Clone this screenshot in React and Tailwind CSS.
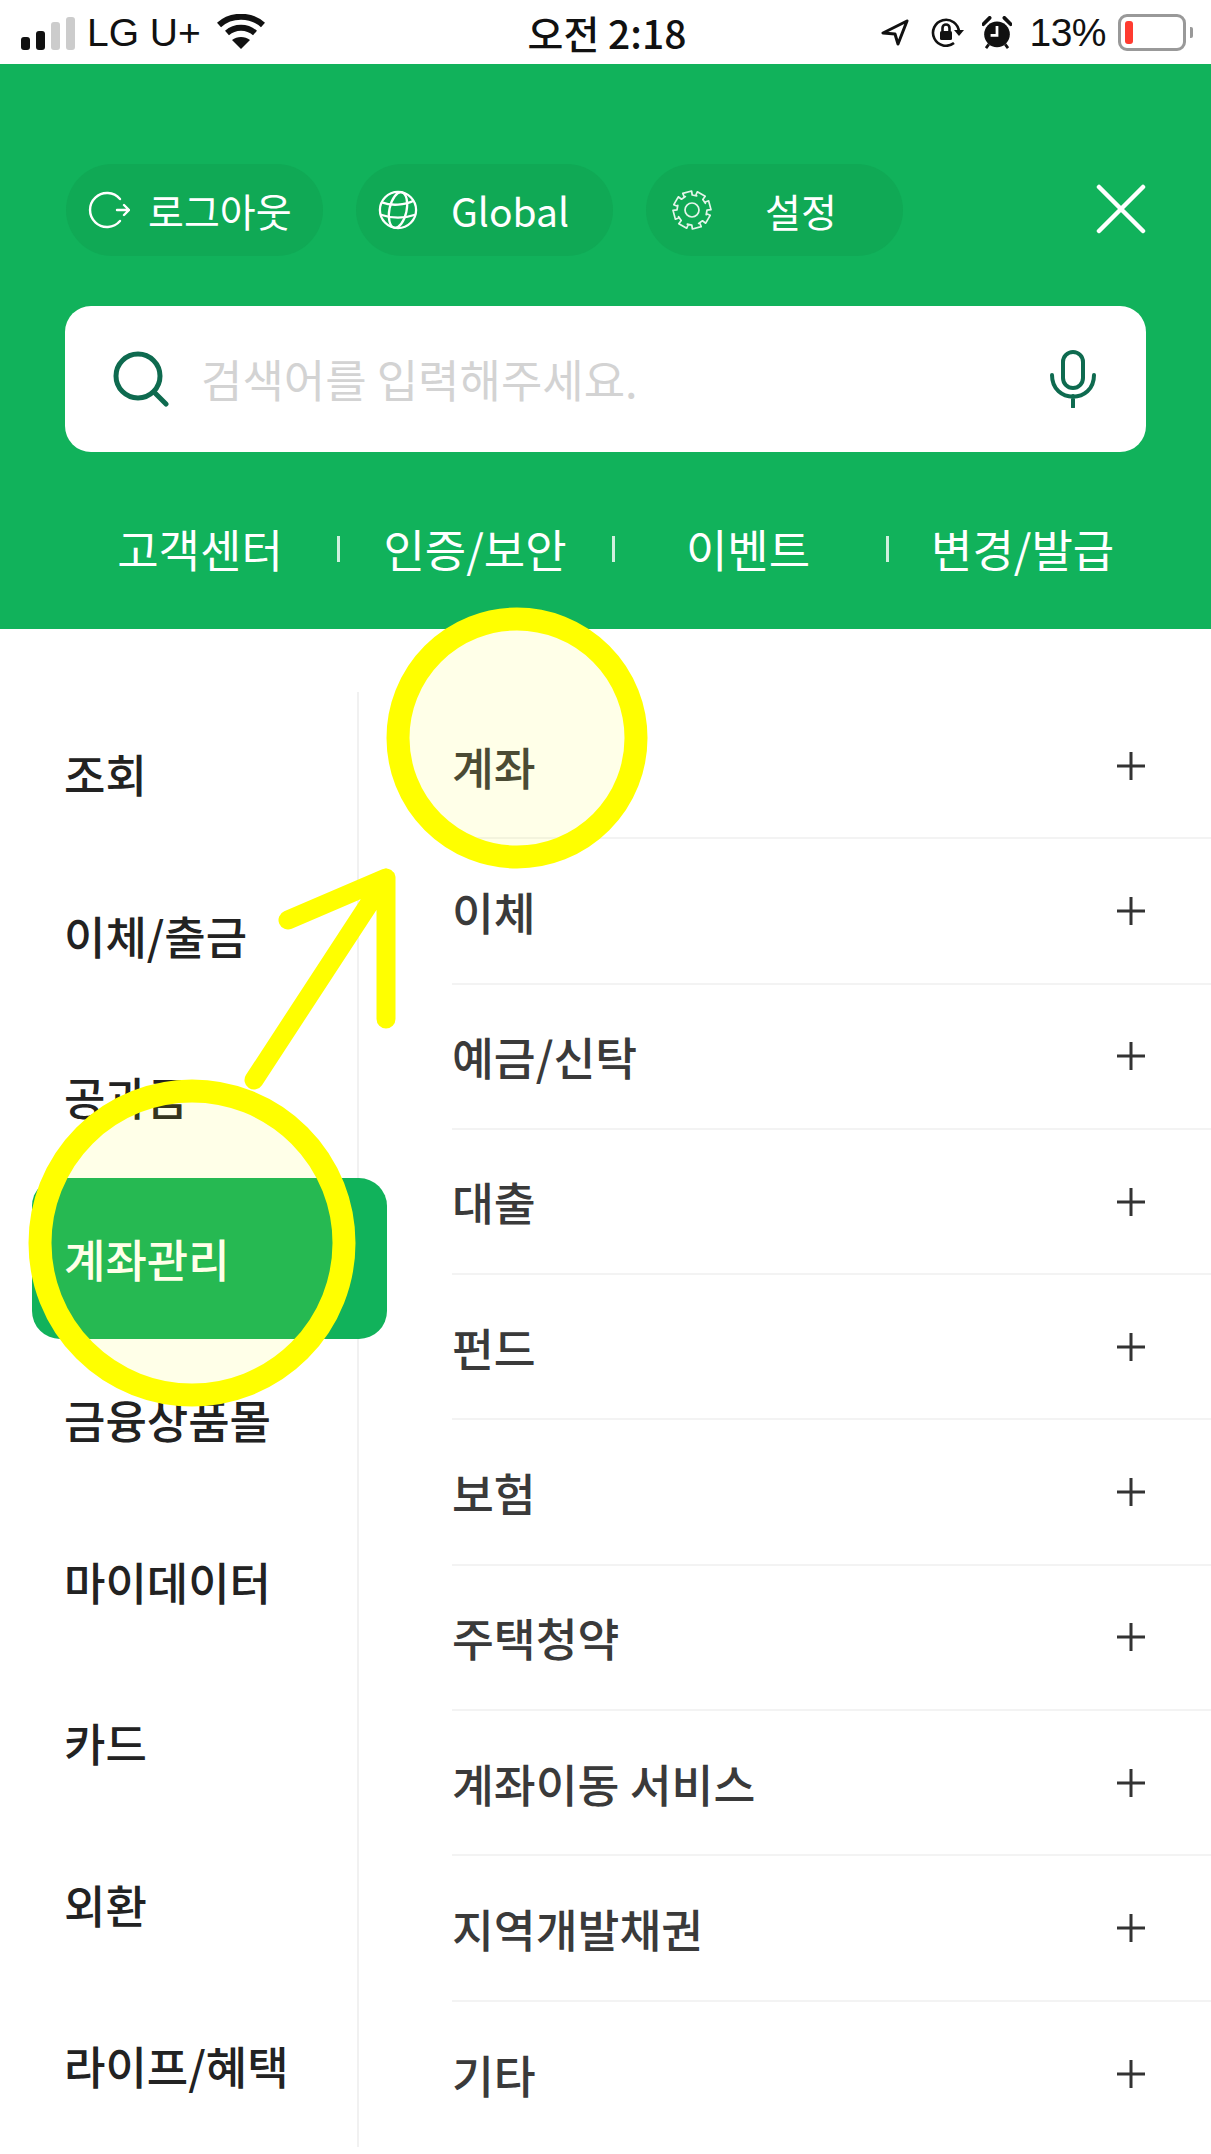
const FONT = "font-['Noto_Sans_CJK_KR','Noto_Sans',sans-serif]";

const sideMenus = ['조회', '이체/출금', '공과금', '계좌관리', '금융상품몰', '마이데이터', '카드', '외환', '라이프/혜택'];
const subMenus = ['계좌', '이체', '예금/신탁', '대출', '펀드', '보험', '주택청약', '계좌이동 서비스', '지역개발채권', '기타'];

// 설정 아이콘 톱니 8개
const gearPath = () => {
  const pts = [];
  for (let i = 0; i < 8; i++) {
    const a = (i * Math.PI) / 4 - Math.PI / 8;
    [[15, -0.13], [19, -0.1], [19, 0.34], [15, 0.37], [15, 0.65]].forEach(([r, d]) => {
      const t = a + d * (Math.PI / 4) * 1.4;
      pts.push(`${(20 + r * Math.cos(t)).toFixed(1)} ${(20 + r * Math.sin(t)).toFixed(1)}`);
    });
  }
  return `M${pts.join(' L')} Z`;
};

function StatusBar() {
  return (
    <div className="h-[64px] bg-white flex items-center pl-[21px] pr-[18px] font-['Liberation_Sans',sans-serif] text-[39px] leading-none text-[#111]">
      <div className="flex-1 flex items-center">
        <div className="flex items-end gap-[6px] h-[34px] mt-[1px]">
          <span className="w-[9px] h-[13px] rounded-[3px] bg-[#111]" />
          <span className="w-[9px] h-[19px] rounded-[3px] bg-[#111]" />
          <span className="w-[9px] h-[28px] rounded-[3px] bg-[#ccc]" />
          <span className="w-[9px] h-[33px] rounded-[3px] bg-[#ccc]" />
        </div>
        <span className="ml-[12px]">LG U+</span>
        <svg className="ml-[16px]" width="48" height="36" viewBox="0 0 48 36" fill="none" stroke="#111" strokeWidth="6">
          <path d="M2 11 C14 0 34 0 46 11" />
          <path d="M10 19 C18 12 30 12 38 19" />
          <path d="M24 35 L15 26 C20 22 28 22 33 26 Z" fill="#111" stroke="none" />
        </svg>
      </div>
      <div className={`${FONT} text-[39px] font-medium`}>오전 2:18</div>
      <div className="flex-1 flex items-center justify-end">
        <svg width="28" height="28" viewBox="0 0 28 28" fill="none" stroke="#111" strokeWidth="3" strokeLinejoin="round">
          <path d="M26 3 L2 15 L14 16 L17 26 Z" />
        </svg>
        <svg className="ml-[21px]" width="34" height="30" viewBox="0 0 34 30" fill="none" stroke="#111" strokeWidth="2.6">
          <path d="M29 15 A13 13 0 1 0 24 26" />
          <path d="M24 13 L29 19 L34 13" fill="#111" stroke="none" />
          <rect x="10" y="14" width="12" height="9" rx="1.5" fill="#111" stroke="none" />
          <path d="M12.5 14 V11 A3.5 3.5 0 0 1 19.5 11 V14" />
        </svg>
        <svg className="ml-[18px]" width="30" height="33" viewBox="0 0 32 36">
          <circle cx="16" cy="20" r="14" fill="#111" />
          <path d="M16 11 V21 H9" fill="none" stroke="#fff" strokeWidth="3" />
          <path d="M1 9 L8 2 M31 9 L24 2" stroke="#111" strokeWidth="4" strokeLinecap="round" />
          <path d="M7 31 L4 35 M25 31 L28 35" stroke="#111" strokeWidth="3" />
        </svg>
        <span className="ml-[17px] tracking-[-0.5px]">13%</span>
        <div className="ml-[12px] w-[68px] h-[37px] border-[3px] border-[#999] rounded-[9px] p-[4px]">
          <div className="w-[8px] h-full bg-[#ff3b30] rounded-[3px]" />
        </div>
        <span className="ml-[4px] w-[3px] h-[11px] bg-[#999] rounded-r-[2px]" />
      </div>
    </div>
  );
}

function Pill({ icon, label, className }) {
  return (
    <div className="w-[257px] h-[92px] rounded-[46px] bg-[#10a955] flex items-center text-white">
      {icon}
      <span className={className}>{label}</span>
    </div>
  );
}

function Header() {
  return (
    <div className="h-[565px] bg-[#11b25b] px-[65px] pt-[100px]">
      <div className="flex items-center">
        <div className="flex gap-[33px] ml-[1px]">
          <Pill
            label="로그아웃"
            className="ml-[18px] text-[39px]"
            icon={
              <svg className="ml-[22px]" width="42" height="42" viewBox="0 0 42 42" fill="none" stroke="#fff" strokeWidth="2.4" strokeLinecap="round" strokeLinejoin="round">
                <path d="M32 10 A17 17 0 1 0 32 32" />
                <path d="M29 21 H41 M36 16 L41 21 L36 26" />
              </svg>
            }
          />
          <Pill
            label="Global"
            className="ml-[33px] text-[39px]"
            icon={
              <svg className="ml-[22px]" width="40" height="40" viewBox="0 0 42 42" fill="none" stroke="#fff" strokeWidth="2.4">
                <circle cx="21" cy="21" r="19" />
                <ellipse cx="21" cy="21" rx="9" ry="19" transform="rotate(12 21 21)" />
                <path d="M4 13 C14 17 28 16 38 11 M3 26 C14 30 28 30 39 26" />
              </svg>
            }
          />
          <Pill
            label="설정"
            className="ml-[53px] text-[39px]"
            icon={
              <svg className="ml-[26px]" width="40" height="40" viewBox="0 0 40 40" fill="none" stroke="#e4f5ea" strokeWidth="1.7" strokeLinejoin="round">
                <path d={gearPath()} />
                <circle cx="20" cy="20" r="7" />
              </svg>
            }
          />
        </div>
        <svg className="ml-auto -mt-[2px]" width="50" height="50" viewBox="0 0 50 50" stroke="#fff" strokeWidth="4.5" strokeLinecap="round">
          <path d="M3 3 L47 47 M47 3 L3 47" />
        </svg>
      </div>

      <div className="mt-[50px] h-[146px] rounded-[26px] bg-white flex items-center pl-[47px] pr-[49px]">
        <svg width="58" height="56" viewBox="0 0 58 56" fill="none" stroke="#0e6a4f" strokeWidth="5" strokeLinecap="round">
          <circle cx="26" cy="25" r="22" />
          <path d="M42 41 L54 53" />
        </svg>
        <span className="ml-[31px] text-[45px] text-[#d3d3d3]">검색어를 입력해주세요.</span>
        <svg className="ml-auto" width="48" height="58" viewBox="0 0 48 58" fill="none" stroke="#0e6a4f" strokeWidth="4" strokeLinecap="round">
          <rect x="14" y="2" width="20" height="36" rx="10" />
          <path d="M3 25 C3 54 45 54 45 25 M24 46 V57" />
        </svg>
      </div>

      <div className="mt-[74px] flex items-center text-white text-[45px] leading-none">
        <span className="w-[270px] text-center">고객센터</span>
        <span className="ml-[2px] w-[3px] h-[26px] bg-white/80" />
        <span className="w-[270px] text-center">인증/보안</span>
        <span className="ml-[2px] w-[3px] h-[26px] bg-white/80" />
        <span className="w-[266px] text-center">이벤트</span>
        <span className="ml-[5px] w-[3px] h-[26px] bg-white/80" />
        <span className="pl-[42px] whitespace-nowrap">변경/발급</span>
      </div>
    </div>
  );
}

function Overlays() {
  return (
    <svg className="absolute left-0 top-0 z-20" width="1211" height="2154" viewBox="0 0 1211 2154" fill="none">
      <circle cx="517" cy="738" r="119" fill="#ffff00" fillOpacity="0.09" stroke="#ffff00" strokeWidth="23" />
      <circle cx="192" cy="1243" r="152" fill="#ffff00" fillOpacity="0.09" stroke="#ffff00" strokeWidth="23" />
      <path d="M254 1080 L386 878 M288 920 L386 878 V1019" stroke="#ffff00" strokeWidth="19" strokeLinecap="round" strokeLinejoin="round" />
    </svg>
  );
}

export default function App() {
  return (
    <div className={`relative w-[1211px] h-[2154px] overflow-hidden bg-white ${FONT}`}>
      <StatusBar />
      <Header />
      <div className="flex pt-[63px]">
        <div className="relative z-10 w-[357px] shrink-0 pl-[32px] pt-[1px]">
          {sideMenus.map((name) => (
            <div
              key={name}
              className={`w-[355px] h-[161.5px] rounded-[28px] pl-[32px] flex items-center text-[45px] font-medium ${
                name === '계좌관리' ? 'bg-[#11b25b] text-white' : 'text-[#222]'
              }`}
            >
              {name}
            </div>
          ))}
        </div>
        <div className="flex-1 border-l-2 border-[#f1f1f1] pl-[93px] pt-[2px]">
          {subMenus.map((name, i) => (
            <div
              key={name}
              className={`h-[145.3px] flex items-center justify-between pr-[66px] text-[45.5px] font-medium text-[#3a3a3a] ${
                i < subMenus.length - 1 ? 'border-b-2 border-[#f3f3f3]' : ''
              }`}
            >
              <span>{name}</span>
              <svg width="28" height="28" viewBox="0 0 28 28" stroke="#333" strokeWidth="3">
                <path d="M14 0 V28 M0 14 H28" />
              </svg>
            </div>
          ))}
        </div>
      </div>
      <Overlays />
    </div>
  );
}
